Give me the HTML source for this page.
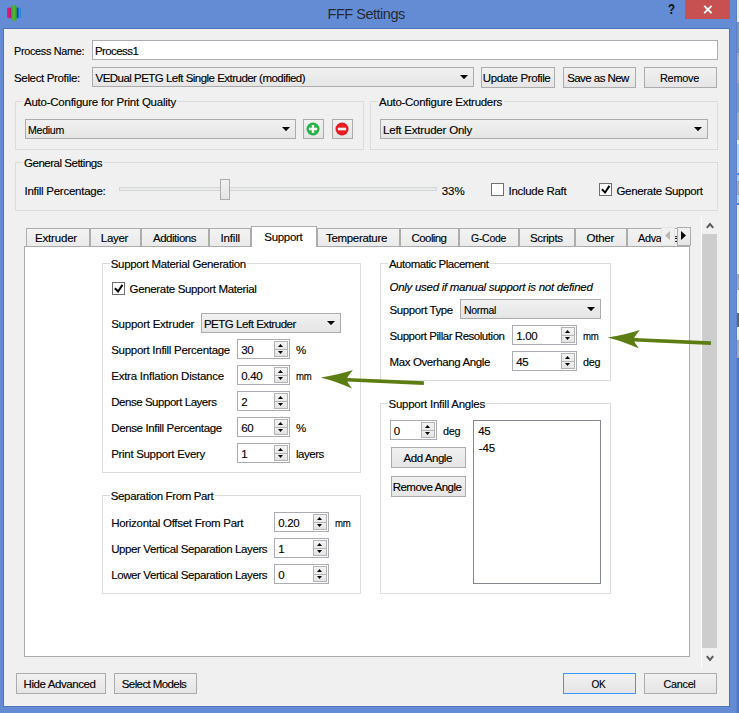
<!DOCTYPE html>
<html><head><meta charset="utf-8"><title>FFF Settings</title>
<style>
html,body{margin:0;padding:0;}
body{width:739px;height:713px;overflow:hidden;position:relative;font-family:"Liberation Sans",sans-serif;font-size:11px;color:#000;background:#648CD5;}
body>div,body>span,body>svg{position:absolute;display:block;}
body>span{white-space:pre;-webkit-text-stroke:0.14px currentColor;}
</style></head><body>
<div style="left:0px;top:0px;width:739px;height:713px;background:#648CD5;"></div>
<div style="left:737px;top:0px;width:2px;height:22px;background:#E9E9E9;"></div>
<div style="left:737px;top:22px;width:2px;height:31px;background:#8096A6;"></div>
<div style="left:737px;top:53px;width:2px;height:30px;background:#A9A9A9;"></div>
<div style="left:737px;top:83px;width:2px;height:30px;background:#8A9CA9;"></div>
<div style="left:737px;top:113px;width:2px;height:27px;background:#AAAAAA;"></div>
<div style="left:737px;top:140px;width:2px;height:4px;background:#EEEEEE;"></div>
<div style="left:737px;top:144px;width:2px;height:29px;background:#B7D2EE;"></div>
<div style="left:737px;top:173px;width:2px;height:2px;background:#4A93DE;"></div>
<div style="left:737px;top:175px;width:2px;height:6px;background:#B7D2EE;"></div>
<div style="left:737px;top:181px;width:2px;height:14px;background:#A9A9A9;"></div>
<div style="left:737px;top:195px;width:2px;height:8px;background:#B7D2EE;"></div>
<div style="left:737px;top:203px;width:2px;height:2px;background:#4A93DE;"></div>
<div style="left:737px;top:205px;width:2px;height:69px;background:#EAEAEA;"></div>
<div style="left:737px;top:274px;width:2px;height:16px;background:#ABABAB;"></div>
<div style="left:737px;top:290px;width:2px;height:23px;background:#E8E8E8;"></div>
<div style="left:737px;top:313px;width:2px;height:14px;background:#666666;"></div>
<div style="left:737px;top:327px;width:2px;height:13px;background:#E8E8E8;"></div>
<div style="left:737px;top:340px;width:2px;height:18px;background:#AAAAAA;"></div>
<div style="left:737px;top:358px;width:2px;height:355px;background:#5077C7;"></div>
<div style="left:736px;top:0px;width:1px;height:713px;background:#5C82CC;"></div>
<div style="left:3px;top:28px;width:727px;height:679px;box-sizing:border-box;border:1px solid rgba(45,75,150,0.38);"></div>
<div style="left:4px;top:29px;width:725px;height:677px;background:#F0F0F0;"></div>
<div style="left:685px;top:0px;width:45px;height:19px;background:#C75050;"></div>
<svg style="left:703px;top:5px" width="10" height="9" viewBox="0 0 10 9"><path d="M1.2 0.8L8.6 8.2M8.6 0.8L1.2 8.2" stroke="#fff" stroke-width="1.9" fill="none"/></svg>
<span style="left:667.60px;top:-0.65px;font-size:14px;line-height:20px;letter-spacing:-0.300px;font-weight:bold;color:#151515;transform:scaleX(0.8230);transform-origin:0 0;">?</span>
<span style="left:327.50px;top:3.88px;font-size:14.5px;line-height:20px;letter-spacing:-0.475px;color:#262a33;-webkit-text-stroke:0;">FFF Settings</span>
<svg style="left:6px;top:4px" width="16" height="18" viewBox="0 0 16 18">
<defs>
<linearGradient id="gp" x1="0" x2="1"><stop offset="0" stop-color="#B21C74"/><stop offset=".35" stop-color="#F0157A"/><stop offset="1" stop-color="#7A1F8E"/></linearGradient>
<linearGradient id="gg" x1="0" x2="1"><stop offset="0" stop-color="#2F9E3A"/><stop offset=".5" stop-color="#5DB82C"/><stop offset="1" stop-color="#27963D"/></linearGradient>
<linearGradient id="gb" x1="0" x2="1"><stop offset="0" stop-color="#2A1C86"/><stop offset=".35" stop-color="#1F4FC0"/><stop offset=".7" stop-color="#1FA5EE"/><stop offset="1" stop-color="#1976D2"/></linearGradient>
</defs>
<rect x="1.2" y="3.5" width="4.4" height="10.8" rx="1.7" fill="url(#gp)"/>
<rect x="10.5" y="3.5" width="4.4" height="10.8" rx="1.7" fill="url(#gb)"/>
<rect x="5.2" y="1.0" width="5.6" height="15.9" rx="2.4" fill="url(#gg)"/>
</svg>
<span style="left:14.00px;top:43.62px;font-size:11.5px;line-height:14px;letter-spacing:-0.300px;transform:scaleX(0.9410);transform-origin:0 0;">Process Name:</span>
<div style="left:92px;top:40px;width:626px;height:20px;box-sizing:border-box;border:1px solid #ABADB3;background:#fff;"></div>
<span style="left:95.00px;top:43.62px;font-size:11.5px;line-height:14px;letter-spacing:-0.592px;">Process1</span>
<span style="left:14.00px;top:71.02px;font-size:11.5px;line-height:14px;letter-spacing:-0.344px;">Select Profile:</span>
<div style="left:92px;top:67px;width:382px;height:20px;box-sizing:border-box;border:1px solid #ACACAC;background:linear-gradient(#F1F1F1,#E5E5E5);"></div>
<span style="left:95.50px;top:70.52px;font-size:11.5px;line-height:14px;letter-spacing:-0.524px;">VEDual PETG Left Single Extruder (modified)</span>
<svg style="left:460.0px;top:75.0px" width="8" height="4.2" viewBox="0 0 8 4.2"><path d="M0 0H8L4.0 4.2Z" fill="#000"/></svg>
<div style="left:481px;top:67px;width:74px;height:21px;box-sizing:border-box;border:1px solid #ACACAC;background:linear-gradient(#F1F1F1,#E5E5E5);"></div>
<span style="left:479.61px;top:70.52px;font-size:11.5px;line-height:14px;letter-spacing:-0.377px;width:74px;text-align:center;">Update Profile</span>
<div style="left:563px;top:67px;width:73px;height:21px;box-sizing:border-box;border:1px solid #ACACAC;background:linear-gradient(#F1F1F1,#E5E5E5);"></div>
<span style="left:561.52px;top:70.52px;font-size:11.5px;line-height:14px;letter-spacing:-0.551px;width:73px;text-align:center;">Save as New</span>
<div style="left:644px;top:67px;width:73px;height:21px;box-sizing:border-box;border:1px solid #ACACAC;background:linear-gradient(#F1F1F1,#E5E5E5);"></div>
<span style="left:642.65px;top:70.52px;font-size:11.5px;line-height:14px;letter-spacing:-0.300px;width:73px;text-align:center;transform:scaleX(0.9506);transform-origin:50% 0;">Remove</span>
<div style="left:15px;top:101px;width:349px;height:49px;box-sizing:border-box;border:1px solid #DCDCDC;"></div>
<span style="left:24.00px;top:95.02px;font-size:11.5px;line-height:14px;letter-spacing:-0.244px;background:#F0F0F0;padding:0 1.5px 0 1px;margin-left:-1px;">Auto-Configure for Print Quality</span>
<div style="left:25px;top:119px;width:271px;height:20px;box-sizing:border-box;border:1px solid #ACACAC;background:linear-gradient(#F1F1F1,#E5E5E5);"></div>
<span style="left:28.30px;top:122.52px;font-size:11.5px;line-height:14px;letter-spacing:-0.300px;transform:scaleX(0.9206);transform-origin:0 0;">Medium</span>
<svg style="left:282.0px;top:127.0px" width="8" height="4.2" viewBox="0 0 8 4.2"><path d="M0 0H8L4.0 4.2Z" fill="#000"/></svg>
<div style="left:303px;top:119px;width:21px;height:20px;box-sizing:border-box;border:1px solid #ACACAC;background:linear-gradient(#F1F1F1,#E5E5E5);"></div>
<div style="left:332px;top:119px;width:21px;height:20px;box-sizing:border-box;border:1px solid #ACACAC;background:linear-gradient(#F1F1F1,#E5E5E5);"></div>
<svg style="left:305.9px;top:122.1px" width="14" height="14" viewBox="0 0 14 14"><circle cx="7" cy="7" r="6.5" fill="#25AC43"/><circle cx="7" cy="7" r="5.7" fill="#2CB54A"/><path d="M7 2.9V11.1M2.9 7H11.1" stroke="#fff" stroke-width="2.3"/></svg>
<svg style="left:335.0px;top:122.1px" width="14" height="14" viewBox="0 0 14 14"><circle cx="7" cy="7" r="6.5" fill="#DE1820"/><circle cx="7" cy="7" r="5.7" fill="#ED1C24"/><path d="M2.9 7H11.1" stroke="#fff" stroke-width="2.6"/></svg>
<div style="left:370px;top:101px;width:348px;height:49px;box-sizing:border-box;border:1px solid #DCDCDC;"></div>
<span style="left:379.00px;top:95.02px;font-size:11.5px;line-height:14px;letter-spacing:-0.282px;background:#F0F0F0;padding:0 1.5px 0 1px;margin-left:-1px;">Auto-Configure Extruders</span>
<div style="left:380px;top:119px;width:328px;height:20px;box-sizing:border-box;border:1px solid #ACACAC;background:linear-gradient(#F1F1F1,#E5E5E5);"></div>
<span style="left:383.00px;top:122.52px;font-size:11.5px;line-height:14px;letter-spacing:-0.205px;">Left Extruder Only</span>
<svg style="left:694.0px;top:127.0px" width="8" height="4.2" viewBox="0 0 8 4.2"><path d="M0 0H8L4.0 4.2Z" fill="#000"/></svg>
<div style="left:15px;top:162px;width:703px;height:49px;box-sizing:border-box;border:1px solid #DCDCDC;"></div>
<span style="left:24.00px;top:156.02px;font-size:11.5px;line-height:14px;letter-spacing:-0.479px;background:#F0F0F0;padding:0 1.5px 0 1px;margin-left:-1px;">General Settings</span>
<span style="left:24.50px;top:184.02px;font-size:11.5px;line-height:14px;letter-spacing:-0.260px;">Infill Percentage:</span>
<div style="left:119px;top:187px;width:318px;height:4px;box-sizing:border-box;border:1px solid #D6D6D6;background:#E7EAEA;"></div>
<div style="left:220px;top:179px;width:10px;height:21px;box-sizing:border-box;border:1px solid #ACACAC;background:linear-gradient(#F1F1F1,#E5E5E5);"></div>
<span style="left:441.70px;top:184.02px;font-size:11.5px;line-height:14px;letter-spacing:-0.010px;">33%</span>
<div style="left:491px;top:183px;width:13px;height:13px;box-sizing:border-box;border:1px solid #707070;background:#fff;"></div>
<span style="left:508.50px;top:184.02px;font-size:11.5px;line-height:14px;letter-spacing:-0.292px;">Include Raft</span>
<div style="left:599px;top:183px;width:13px;height:13px;box-sizing:border-box;border:1px solid #707070;background:#fff;"></div>
<svg style="left:599px;top:183px" width="13" height="13" viewBox="0 0 13 13"><path d="M2.9 6.3L6.1 9.5L10.4 2.9" fill="none" stroke="#000" stroke-width="2"/></svg>
<span style="left:616.50px;top:184.02px;font-size:11.5px;line-height:14px;letter-spacing:-0.326px;">Generate Support</span>
<div style="left:24px;top:246px;width:666px;height:411px;box-sizing:border-box;border:1px solid #ACACAC;background:#fff;"></div>
<div style="left:26px;top:228px;width:64px;height:19px;box-sizing:border-box;border:1px solid #ACACAC;background:linear-gradient(#F3F3F3,#EAEAEA);overflow:hidden;"></div>
<span style="left:35.00px;top:231.02px;font-size:11.5px;line-height:14px;letter-spacing:-0.184px;">Extruder</span>
<div style="left:90px;top:228px;width:51px;height:19px;box-sizing:border-box;border:1px solid #ACACAC;background:linear-gradient(#F3F3F3,#EAEAEA);overflow:hidden;"></div>
<span style="left:100.80px;top:231.02px;font-size:11.5px;line-height:14px;letter-spacing:-0.316px;">Layer</span>
<div style="left:141px;top:228px;width:68px;height:19px;box-sizing:border-box;border:1px solid #ACACAC;background:linear-gradient(#F3F3F3,#EAEAEA);overflow:hidden;"></div>
<span style="left:153.00px;top:231.02px;font-size:11.5px;line-height:14px;letter-spacing:-0.479px;">Additions</span>
<div style="left:209px;top:228px;width:42px;height:19px;box-sizing:border-box;border:1px solid #ACACAC;background:linear-gradient(#F3F3F3,#EAEAEA);overflow:hidden;"></div>
<span style="left:220.50px;top:231.02px;font-size:11.5px;line-height:14px;letter-spacing:-0.159px;">Infill</span>
<div style="left:317px;top:228px;width:83px;height:19px;box-sizing:border-box;border:1px solid #ACACAC;background:linear-gradient(#F3F3F3,#EAEAEA);overflow:hidden;"></div>
<span style="left:326.00px;top:231.02px;font-size:11.5px;line-height:14px;letter-spacing:-0.324px;">Temperature</span>
<div style="left:400px;top:228px;width:59px;height:19px;box-sizing:border-box;border:1px solid #ACACAC;background:linear-gradient(#F3F3F3,#EAEAEA);overflow:hidden;"></div>
<span style="left:411.60px;top:231.02px;font-size:11.5px;line-height:14px;letter-spacing:-0.600px;">Cooling</span>
<div style="left:459px;top:228px;width:60px;height:19px;box-sizing:border-box;border:1px solid #ACACAC;background:linear-gradient(#F3F3F3,#EAEAEA);overflow:hidden;"></div>
<span style="left:470.80px;top:231.02px;font-size:11.5px;line-height:14px;letter-spacing:-0.300px;transform:scaleX(0.9121);transform-origin:0 0;">G-Code</span>
<div style="left:519px;top:228px;width:56px;height:19px;box-sizing:border-box;border:1px solid #ACACAC;background:linear-gradient(#F3F3F3,#EAEAEA);overflow:hidden;"></div>
<span style="left:530.00px;top:231.02px;font-size:11.5px;line-height:14px;letter-spacing:-0.365px;">Scripts</span>
<div style="left:575px;top:228px;width:52px;height:19px;box-sizing:border-box;border:1px solid #ACACAC;background:linear-gradient(#F3F3F3,#EAEAEA);overflow:hidden;"></div>
<span style="left:586.50px;top:231.02px;font-size:11.5px;line-height:14px;letter-spacing:-0.253px;">Other</span>
<div style="left:627px;top:228px;width:63px;height:19px;box-sizing:border-box;border:1px solid #ACACAC;background:linear-gradient(#F3F3F3,#EAEAEA);overflow:hidden;"></div>
<span style="left:638.00px;top:231.02px;font-size:11.5px;line-height:14px;letter-spacing:-0.300px;transform:scaleX(0.9435);transform-origin:0 0;">Advanced</span>
<div style="left:251px;top:226px;width:66px;height:21px;box-sizing:border-box;border:1px solid #ACACAC;border-bottom:none;background:#fff;"></div>
<span style="left:264.30px;top:230.32px;font-size:11.5px;line-height:14px;letter-spacing:-0.297px;">Support</span>
<div style="left:661px;top:227px;width:14px;height:19px;box-sizing:border-box;border:1px solid #E3E3E3;background:#F0F0F0;"></div>
<div style="left:677px;top:227px;width:14px;height:19px;box-sizing:border-box;border:1px solid #ACACAC;background:linear-gradient(#F1F1F1,#E5E5E5);"></div>
<svg style="left:665px;top:231px" width="5" height="9" viewBox="0 0 5 9"><path d="M5 0V9L0 4.5Z" fill="#B8B8B8"/></svg>
<svg style="left:681px;top:231px" width="5" height="9" viewBox="0 0 5 9"><path d="M0 0V9L5 4.5Z" fill="#000"/></svg>
<div style="left:701px;top:217px;width:1px;height:450px;background:#fff;"></div>
<div style="left:702px;top:234px;width:15px;height:414px;background:#CDCDCD;"></div>
<svg style="left:705.6px;top:222.3px" width="8" height="7" viewBox="0 0 8 7"><path d="M0.8 5.9L4 2L7.2 5.9" fill="none" stroke="#5A5A5A" stroke-width="2"/></svg>
<svg style="left:705.6px;top:654.5px" width="8" height="7" viewBox="0 0 8 7"><path d="M0.8 1.1L4 5L7.2 1.1" fill="none" stroke="#5A5A5A" stroke-width="2"/></svg>
<div style="left:102px;top:263px;width:259px;height:210px;box-sizing:border-box;border:1px solid #DCDCDC;"></div>
<span style="left:110.80px;top:257.02px;font-size:11.5px;line-height:14px;letter-spacing:-0.351px;background:#fff;padding:0 1.5px 0 1px;margin-left:-1px;">Support Material Generation</span>
<div style="left:112px;top:282px;width:13px;height:13px;box-sizing:border-box;border:1px solid #707070;background:#fff;"></div>
<svg style="left:112px;top:282px" width="13" height="13" viewBox="0 0 13 13"><path d="M2.9 6.3L6.1 9.5L10.4 2.9" fill="none" stroke="#000" stroke-width="2"/></svg>
<span style="left:129.60px;top:281.82px;font-size:11.5px;line-height:14px;letter-spacing:-0.341px;">Generate Support Material</span>
<span style="left:111.20px;top:317.22px;font-size:11.5px;line-height:14px;letter-spacing:-0.246px;">Support Extruder</span>
<div style="left:201px;top:313px;width:140px;height:20px;box-sizing:border-box;border:1px solid #ACACAC;background:linear-gradient(#F1F1F1,#E5E5E5);"></div>
<span style="left:203.90px;top:316.52px;font-size:11.5px;line-height:14px;letter-spacing:-0.464px;">PETG Left Extruder</span>
<svg style="left:327.0px;top:321.0px" width="8" height="4.2" viewBox="0 0 8 4.2"><path d="M0 0H8L4.0 4.2Z" fill="#000"/></svg>
<span style="left:111.20px;top:342.92px;font-size:11.5px;line-height:14px;letter-spacing:-0.286px;">Support Infill Percentage</span>
<div style="left:237px;top:339px;width:53px;height:20px;box-sizing:border-box;border:1px solid #ABADB3;background:#fff;"></div>
<span style="left:241.20px;top:342.62px;font-size:11.5px;line-height:14px;letter-spacing:-0.365px;">30</span>
<div style="left:274px;top:341px;width:14px;height:9px;box-sizing:border-box;border:1px solid #B4B4B4;background:linear-gradient(#F4F4F4,#E9E9E9);"></div>
<div style="left:274px;top:350px;width:14px;height:7px;box-sizing:border-box;border:1px solid #B4B4B4;border-top:none;background:linear-gradient(#EFEFEF,#E3E3E3);"></div>
<svg style="left:278.0px;top:343.6px" width="5" height="3" viewBox="0 0 5 3"><path d="M0 3H5L2.5 0Z" fill="#000"/></svg>
<svg style="left:278.0px;top:351.2px" width="5" height="3" viewBox="0 0 5 3"><path d="M0 0H5L2.5 3Z" fill="#000"/></svg>
<span style="left:296.00px;top:342.52px;font-size:11.5px;line-height:14px;letter-spacing:-0.583px;">%</span>
<span style="left:111.20px;top:368.92px;font-size:11.5px;line-height:14px;letter-spacing:-0.228px;">Extra Inflation Distance</span>
<div style="left:237px;top:365px;width:53px;height:20px;box-sizing:border-box;border:1px solid #ABADB3;background:#fff;"></div>
<span style="left:241.20px;top:368.62px;font-size:11.5px;line-height:14px;letter-spacing:-0.319px;">0.40</span>
<div style="left:274px;top:367px;width:14px;height:9px;box-sizing:border-box;border:1px solid #B4B4B4;background:linear-gradient(#F4F4F4,#E9E9E9);"></div>
<div style="left:274px;top:376px;width:14px;height:7px;box-sizing:border-box;border:1px solid #B4B4B4;border-top:none;background:linear-gradient(#EFEFEF,#E3E3E3);"></div>
<svg style="left:278.0px;top:369.6px" width="5" height="3" viewBox="0 0 5 3"><path d="M0 3H5L2.5 0Z" fill="#000"/></svg>
<svg style="left:278.0px;top:377.2px" width="5" height="3" viewBox="0 0 5 3"><path d="M0 0H5L2.5 3Z" fill="#000"/></svg>
<span style="left:296.00px;top:368.52px;font-size:11.5px;line-height:14px;letter-spacing:-0.300px;transform:scaleX(0.8346);transform-origin:0 0;">mm</span>
<span style="left:111.20px;top:394.92px;font-size:11.5px;line-height:14px;letter-spacing:-0.457px;">Dense Support Layers</span>
<div style="left:237px;top:391px;width:53px;height:20px;box-sizing:border-box;border:1px solid #ABADB3;background:#fff;"></div>
<span style="left:241.20px;top:394.62px;font-size:11.5px;line-height:14px;letter-spacing:-0.365px;">2</span>
<div style="left:274px;top:393px;width:14px;height:9px;box-sizing:border-box;border:1px solid #B4B4B4;background:linear-gradient(#F4F4F4,#E9E9E9);"></div>
<div style="left:274px;top:402px;width:14px;height:7px;box-sizing:border-box;border:1px solid #B4B4B4;border-top:none;background:linear-gradient(#EFEFEF,#E3E3E3);"></div>
<svg style="left:278.0px;top:395.6px" width="5" height="3" viewBox="0 0 5 3"><path d="M0 3H5L2.5 0Z" fill="#000"/></svg>
<svg style="left:278.0px;top:403.2px" width="5" height="3" viewBox="0 0 5 3"><path d="M0 0H5L2.5 3Z" fill="#000"/></svg>
<span style="left:111.20px;top:420.92px;font-size:11.5px;line-height:14px;letter-spacing:-0.361px;">Dense Infill Percentage</span>
<div style="left:237px;top:417px;width:53px;height:20px;box-sizing:border-box;border:1px solid #ABADB3;background:#fff;"></div>
<span style="left:241.20px;top:420.62px;font-size:11.5px;line-height:14px;letter-spacing:-0.365px;">60</span>
<div style="left:274px;top:419px;width:14px;height:9px;box-sizing:border-box;border:1px solid #B4B4B4;background:linear-gradient(#F4F4F4,#E9E9E9);"></div>
<div style="left:274px;top:428px;width:14px;height:7px;box-sizing:border-box;border:1px solid #B4B4B4;border-top:none;background:linear-gradient(#EFEFEF,#E3E3E3);"></div>
<svg style="left:278.0px;top:421.6px" width="5" height="3" viewBox="0 0 5 3"><path d="M0 3H5L2.5 0Z" fill="#000"/></svg>
<svg style="left:278.0px;top:429.2px" width="5" height="3" viewBox="0 0 5 3"><path d="M0 0H5L2.5 3Z" fill="#000"/></svg>
<span style="left:296.00px;top:420.52px;font-size:11.5px;line-height:14px;letter-spacing:-0.583px;">%</span>
<span style="left:111.20px;top:446.92px;font-size:11.5px;line-height:14px;letter-spacing:-0.312px;">Print Support Every</span>
<div style="left:237px;top:443px;width:53px;height:20px;box-sizing:border-box;border:1px solid #ABADB3;background:#fff;"></div>
<span style="left:241.20px;top:446.62px;font-size:11.5px;line-height:14px;letter-spacing:-0.365px;">1</span>
<div style="left:274px;top:445px;width:14px;height:9px;box-sizing:border-box;border:1px solid #B4B4B4;background:linear-gradient(#F4F4F4,#E9E9E9);"></div>
<div style="left:274px;top:454px;width:14px;height:7px;box-sizing:border-box;border:1px solid #B4B4B4;border-top:none;background:linear-gradient(#EFEFEF,#E3E3E3);"></div>
<svg style="left:278.0px;top:447.6px" width="5" height="3" viewBox="0 0 5 3"><path d="M0 3H5L2.5 0Z" fill="#000"/></svg>
<svg style="left:278.0px;top:455.2px" width="5" height="3" viewBox="0 0 5 3"><path d="M0 0H5L2.5 3Z" fill="#000"/></svg>
<span style="left:296.00px;top:446.52px;font-size:11.5px;line-height:14px;letter-spacing:-0.481px;">layers</span>
<div style="left:102px;top:495px;width:259px;height:99px;box-sizing:border-box;border:1px solid #DCDCDC;"></div>
<span style="left:110.80px;top:489.02px;font-size:11.5px;line-height:14px;letter-spacing:-0.372px;background:#fff;padding:0 1.5px 0 1px;margin-left:-1px;">Separation From Part</span>
<span style="left:111.20px;top:515.92px;font-size:11.5px;line-height:14px;letter-spacing:-0.287px;">Horizontal Offset From Part</span>
<div style="left:274px;top:512px;width:55px;height:20px;box-sizing:border-box;border:1px solid #ABADB3;background:#fff;"></div>
<span style="left:278.20px;top:515.62px;font-size:11.5px;line-height:14px;letter-spacing:-0.319px;">0.20</span>
<div style="left:313px;top:514px;width:14px;height:9px;box-sizing:border-box;border:1px solid #B4B4B4;background:linear-gradient(#F4F4F4,#E9E9E9);"></div>
<div style="left:313px;top:523px;width:14px;height:7px;box-sizing:border-box;border:1px solid #B4B4B4;border-top:none;background:linear-gradient(#EFEFEF,#E3E3E3);"></div>
<svg style="left:317.0px;top:516.6px" width="5" height="3" viewBox="0 0 5 3"><path d="M0 3H5L2.5 0Z" fill="#000"/></svg>
<svg style="left:317.0px;top:524.2px" width="5" height="3" viewBox="0 0 5 3"><path d="M0 0H5L2.5 3Z" fill="#000"/></svg>
<span style="left:334.80px;top:516.02px;font-size:11.5px;line-height:14px;letter-spacing:-0.300px;transform:scaleX(0.8400);transform-origin:0 0;">mm</span>
<span style="left:111.20px;top:541.92px;font-size:11.5px;line-height:14px;letter-spacing:-0.399px;">Upper Vertical Separation Layers</span>
<div style="left:274px;top:538px;width:55px;height:20px;box-sizing:border-box;border:1px solid #ABADB3;background:#fff;"></div>
<span style="left:278.20px;top:541.62px;font-size:11.5px;line-height:14px;letter-spacing:-0.365px;">1</span>
<div style="left:313px;top:540px;width:14px;height:9px;box-sizing:border-box;border:1px solid #B4B4B4;background:linear-gradient(#F4F4F4,#E9E9E9);"></div>
<div style="left:313px;top:549px;width:14px;height:7px;box-sizing:border-box;border:1px solid #B4B4B4;border-top:none;background:linear-gradient(#EFEFEF,#E3E3E3);"></div>
<svg style="left:317.0px;top:542.6px" width="5" height="3" viewBox="0 0 5 3"><path d="M0 3H5L2.5 0Z" fill="#000"/></svg>
<svg style="left:317.0px;top:550.2px" width="5" height="3" viewBox="0 0 5 3"><path d="M0 0H5L2.5 3Z" fill="#000"/></svg>
<span style="left:111.20px;top:567.92px;font-size:11.5px;line-height:14px;letter-spacing:-0.399px;">Lower Vertical Separation Layers</span>
<div style="left:274px;top:564px;width:55px;height:20px;box-sizing:border-box;border:1px solid #ABADB3;background:#fff;"></div>
<span style="left:278.20px;top:567.62px;font-size:11.5px;line-height:14px;letter-spacing:-0.365px;">0</span>
<div style="left:313px;top:566px;width:14px;height:9px;box-sizing:border-box;border:1px solid #B4B4B4;background:linear-gradient(#F4F4F4,#E9E9E9);"></div>
<div style="left:313px;top:575px;width:14px;height:7px;box-sizing:border-box;border:1px solid #B4B4B4;border-top:none;background:linear-gradient(#EFEFEF,#E3E3E3);"></div>
<svg style="left:317.0px;top:568.6px" width="5" height="3" viewBox="0 0 5 3"><path d="M0 3H5L2.5 0Z" fill="#000"/></svg>
<svg style="left:317.0px;top:576.2px" width="5" height="3" viewBox="0 0 5 3"><path d="M0 0H5L2.5 3Z" fill="#000"/></svg>
<div style="left:380px;top:263px;width:231px;height:118px;box-sizing:border-box;border:1px solid #DCDCDC;"></div>
<span style="left:388.90px;top:257.02px;font-size:11.5px;line-height:14px;letter-spacing:-0.477px;background:#fff;padding:0 1.5px 0 1px;margin-left:-1px;">Automatic Placement</span>
<span style="left:389.50px;top:279.82px;font-size:11.5px;line-height:14px;letter-spacing:-0.281px;font-style:italic;">Only used if manual support is not defined</span>
<span style="left:389.50px;top:303.32px;font-size:11.5px;line-height:14px;letter-spacing:-0.409px;">Support Type</span>
<div style="left:460px;top:299px;width:141px;height:20px;box-sizing:border-box;border:1px solid #ACACAC;background:linear-gradient(#F1F1F1,#E5E5E5);"></div>
<span style="left:463.80px;top:302.52px;font-size:11.5px;line-height:14px;letter-spacing:-0.300px;transform:scaleX(0.9103);transform-origin:0 0;">Normal</span>
<svg style="left:587.0px;top:307.0px" width="8" height="4.2" viewBox="0 0 8 4.2"><path d="M0 0H8L4.0 4.2Z" fill="#000"/></svg>
<span style="left:389.50px;top:328.82px;font-size:11.5px;line-height:14px;letter-spacing:-0.463px;">Support Pillar Resolution</span>
<div style="left:512px;top:325px;width:65px;height:20px;box-sizing:border-box;border:1px solid #ABADB3;background:#fff;"></div>
<span style="left:516.20px;top:328.62px;font-size:11.5px;line-height:14px;letter-spacing:-0.319px;">1.00</span>
<div style="left:561px;top:327px;width:14px;height:9px;box-sizing:border-box;border:1px solid #B4B4B4;background:linear-gradient(#F4F4F4,#E9E9E9);"></div>
<div style="left:561px;top:336px;width:14px;height:7px;box-sizing:border-box;border:1px solid #B4B4B4;border-top:none;background:linear-gradient(#EFEFEF,#E3E3E3);"></div>
<svg style="left:565.0px;top:329.6px" width="5" height="3" viewBox="0 0 5 3"><path d="M0 3H5L2.5 0Z" fill="#000"/></svg>
<svg style="left:565.0px;top:337.2px" width="5" height="3" viewBox="0 0 5 3"><path d="M0 0H5L2.5 3Z" fill="#000"/></svg>
<span style="left:582.80px;top:329.02px;font-size:11.5px;line-height:14px;letter-spacing:-0.300px;transform:scaleX(0.8400);transform-origin:0 0;">mm</span>
<span style="left:389.50px;top:354.72px;font-size:11.5px;line-height:14px;letter-spacing:-0.384px;">Max Overhang Angle</span>
<div style="left:512px;top:351px;width:65px;height:20px;box-sizing:border-box;border:1px solid #ABADB3;background:#fff;"></div>
<span style="left:516.20px;top:354.62px;font-size:11.5px;line-height:14px;letter-spacing:-0.365px;">45</span>
<div style="left:561px;top:353px;width:14px;height:9px;box-sizing:border-box;border:1px solid #B4B4B4;background:linear-gradient(#F4F4F4,#E9E9E9);"></div>
<div style="left:561px;top:362px;width:14px;height:7px;box-sizing:border-box;border:1px solid #B4B4B4;border-top:none;background:linear-gradient(#EFEFEF,#E3E3E3);"></div>
<svg style="left:565.0px;top:355.6px" width="5" height="3" viewBox="0 0 5 3"><path d="M0 3H5L2.5 0Z" fill="#000"/></svg>
<svg style="left:565.0px;top:363.2px" width="5" height="3" viewBox="0 0 5 3"><path d="M0 0H5L2.5 3Z" fill="#000"/></svg>
<span style="left:582.80px;top:355.02px;font-size:11.5px;line-height:14px;letter-spacing:-0.300px;transform:scaleX(0.9405);transform-origin:0 0;">deg</span>
<div style="left:380px;top:403px;width:231px;height:191px;box-sizing:border-box;border:1px solid #DCDCDC;"></div>
<span style="left:388.50px;top:397.02px;font-size:11.5px;line-height:14px;letter-spacing:-0.246px;background:#fff;padding:0 1.5px 0 1px;margin-left:-1px;">Support Infill Angles</span>
<div style="left:390px;top:420px;width:47px;height:20px;box-sizing:border-box;border:1px solid #ABADB3;background:#fff;"></div>
<span style="left:393.70px;top:423.62px;font-size:11.5px;line-height:14px;letter-spacing:-0.365px;">0</span>
<div style="left:421px;top:422px;width:14px;height:9px;box-sizing:border-box;border:1px solid #B4B4B4;background:linear-gradient(#F4F4F4,#E9E9E9);"></div>
<div style="left:421px;top:431px;width:14px;height:7px;box-sizing:border-box;border:1px solid #B4B4B4;border-top:none;background:linear-gradient(#EFEFEF,#E3E3E3);"></div>
<svg style="left:425.0px;top:424.6px" width="5" height="3" viewBox="0 0 5 3"><path d="M0 3H5L2.5 0Z" fill="#000"/></svg>
<svg style="left:425.0px;top:432.2px" width="5" height="3" viewBox="0 0 5 3"><path d="M0 0H5L2.5 3Z" fill="#000"/></svg>
<span style="left:442.70px;top:424.22px;font-size:11.5px;line-height:14px;letter-spacing:-0.300px;transform:scaleX(0.9405);transform-origin:0 0;">deg</span>
<div style="left:391px;top:447px;width:75px;height:21px;box-sizing:border-box;border:1px solid #ACACAC;background:linear-gradient(#F1F1F1,#E5E5E5);"></div>
<span style="left:403.60px;top:450.52px;font-size:11.5px;line-height:14px;letter-spacing:-0.460px;">Add Angle</span>
<div style="left:391px;top:476px;width:75px;height:21px;box-sizing:border-box;border:1px solid #ACACAC;background:linear-gradient(#F1F1F1,#E5E5E5);"></div>
<span style="left:389.55px;top:479.52px;font-size:11.5px;line-height:14px;letter-spacing:-0.508px;width:75px;text-align:center;">Remove Angle</span>
<div style="left:473px;top:420px;width:128px;height:164px;box-sizing:border-box;border:1px solid #828790;background:#fff;"></div>
<span style="left:478.30px;top:423.82px;font-size:11.5px;line-height:14px;letter-spacing:-0.365px;">45</span>
<span style="left:478.80px;top:441.02px;font-size:11.5px;line-height:14px;letter-spacing:-0.142px;">-45</span>
<div style="left:16px;top:673px;width:90px;height:21px;box-sizing:border-box;border:1px solid #ACACAC;background:linear-gradient(#F1F1F1,#E5E5E5);"></div>
<span style="left:14.59px;top:676.52px;font-size:11.5px;line-height:14px;letter-spacing:-0.413px;width:90px;text-align:center;">Hide Advanced</span>
<div style="left:114px;top:673px;width:83px;height:21px;box-sizing:border-box;border:1px solid #ACACAC;background:linear-gradient(#F1F1F1,#E5E5E5);"></div>
<span style="left:112.50px;top:676.52px;font-size:11.5px;line-height:14px;letter-spacing:-0.595px;width:83px;text-align:center;">Select Models</span>
<div style="left:563px;top:673px;width:73px;height:21px;box-sizing:border-box;border:1px solid #3399FF;background:linear-gradient(#F1F1F1,#E5E5E5);"></div>
<span style="left:561.65px;top:676.52px;font-size:11.5px;line-height:14px;letter-spacing:-0.300px;width:73px;text-align:center;transform:scaleX(0.8736);transform-origin:50% 0;">OK</span>
<div style="left:644px;top:673px;width:73px;height:21px;box-sizing:border-box;border:1px solid #ACACAC;background:linear-gradient(#F1F1F1,#E5E5E5);"></div>
<span style="left:642.65px;top:676.52px;font-size:11.5px;line-height:14px;letter-spacing:-0.300px;width:73px;text-align:center;transform:scaleX(0.9408);transform-origin:50% 0;">Cancel</span>
<svg style="left:0;top:0" width="739" height="713" viewBox="0 0 739 713"><path d="M320.70 377.40 Q338.30 374.80 352.90 370.00 Q349.30 374.20 347.10 377.90 L424.00 381.30 L423.80 384.90 L347.30 381.50 Q349.10 384.80 352.00 388.50 Q337.70 381.80 320.70 377.40Z" fill="#5C7D12"/><path d="M607.70 337.40 Q625.30 334.80 639.90 330.00 Q636.30 334.20 634.10 337.90 L711.00 341.30 L710.80 344.90 L634.30 341.50 Q636.10 344.80 639.00 348.50 Q624.70 341.80 607.70 337.40Z" fill="#5C7D12"/></svg>
</body></html>
